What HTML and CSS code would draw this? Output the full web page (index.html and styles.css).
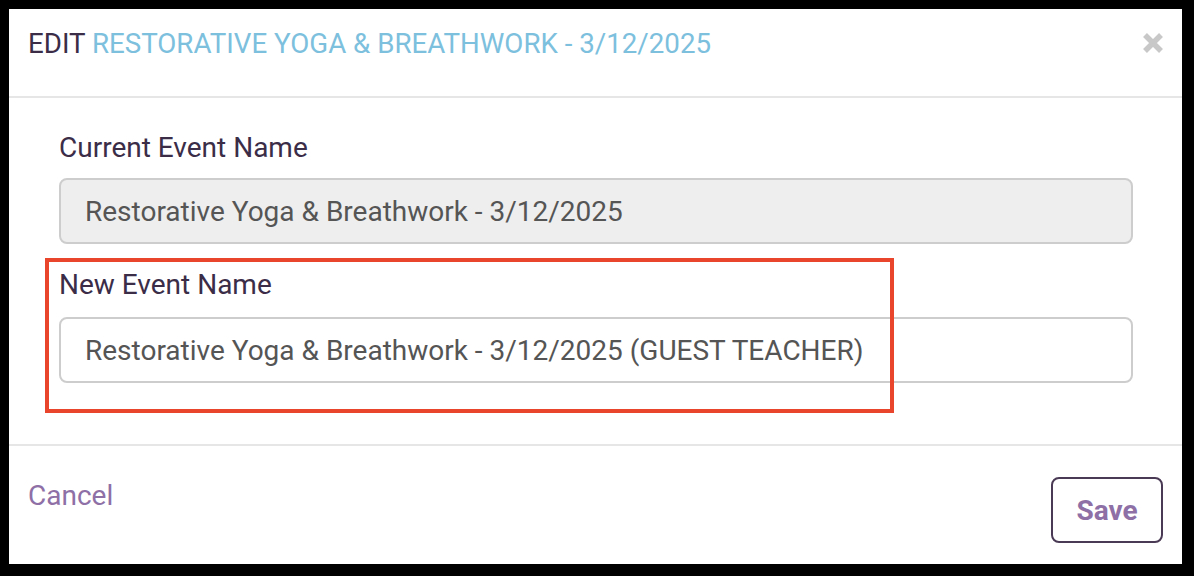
FILE: index.html
```html
<!DOCTYPE html>
<html lang="en">
<head>
<meta charset="utf-8">
<title>Edit Event</title>
<link rel="stylesheet" href="styles.css">
</head>
<body>
<div class="modal">
  <div class="modal-header">
    <h4 class="modal-title">EDIT <span class="event">RESTORATIVE YOGA &amp; BREATHWORK - 3/12/2025</span></h4>
    <button class="close" type="button" aria-label="Close">
      <svg width="20" height="20" viewBox="0 0 20 20"><path d="M2 2L18 18M18 2L2 18" stroke="#c8c8c8" stroke-width="5.5" stroke-linecap="butt" fill="none"/></svg>
    </button>
  </div>
  <div class="modal-body">
    <div class="form-group">
      <label class="label">Current Event Name</label>
      <input class="input input-disabled" type="text" value="Restorative Yoga &amp; Breathwork - 3/12/2025" disabled>
    </div>
    <div class="form-group last">
      <label class="label label-new">New Event Name</label>
      <input class="input" type="text" value="Restorative Yoga &amp; Breathwork - 3/12/2025 (GUEST TEACHER)">
    </div>
  </div>
  <div class="modal-footer">
    <a class="cancel" href="#">Cancel</a>
    <button class="save" type="button">Save</button>
  </div>
  <div class="highlight"></div>
</div>
</body>
</html>
```

FILE: styles.css
```css
html, body {
  margin: 0;
  padding: 0;
  background: #000;
}
body {
  width: 1194px;
  height: 576px;
  overflow: hidden;
  font-family: Roboto, "Liberation Sans", Arial, sans-serif;
}
.modal {
  position: relative;
  margin: 9px 0 0 9px;
  width: 1173px;
  height: 555px;
  background: #fff;
  display: flex;
  flex-direction: column;
}
.modal-header {
  display: flex;
  justify-content: space-between;
  align-items: flex-start;
  box-sizing: border-box;
  height: 89px;
  padding: 15px 19px 0 19px;
  border-bottom: 2px solid #e6e6e6;
}
.modal-title {
  margin: 0;
  font-size: 27.7px;
  font-weight: 400;
  line-height: 40px;
  color: #3b2d48;
}
.event {
  color: #7cc0de;
}
.close {
  margin: 9px 0 0 0;
  padding: 0;
  border: 0;
  background: transparent;
  width: 20px;
  height: 20px;
  display: block;
}
.close svg {
  display: block;
}
.modal-body {
  padding: 30px 49px 0 50px;
  height: 348px;
  box-sizing: border-box;
  border-bottom: 2px solid #e6e6e6;
}
.form-group {
  display: flex;
  flex-direction: column;
  margin-bottom: 21px;
}
.label {
  font-size: 28px;
  line-height: 40px;
  color: #3b2d48;
  margin-bottom: 10px;
}
.label-new {
  margin-bottom: 12px;
}
.input {
  box-sizing: border-box;
  height: 66px;
  width: 100%;
  border: 2px solid #cdcdcd;
  border-radius: 8px;
  padding: 0 24px;
  font-family: Roboto, "Liberation Sans", Arial, sans-serif;
  font-size: 28px;
  color: #555;
  background: #fff;
  outline: none;
}
.input-disabled {
  background: #eee;
  color: #555;
  -webkit-text-fill-color: #555;
  opacity: 1;
}
.modal-footer {
  display: flex;
  justify-content: space-between;
  align-items: flex-start;
  padding: 31px 19px 0 19px;
}
.cancel {
  font-size: 28px;
  line-height: 40px;
  color: #8e6fa6;
  text-decoration: none;
  margin-top: -1px;
}
.save {
  box-sizing: border-box;
  width: 112px;
  height: 66px;
  border: 2px solid #4a3a55;
  border-radius: 8px;
  background: #fff;
  color: #8e6fa6;
  font-family: Roboto, "Liberation Sans", Arial, sans-serif;
  font-size: 28px;
  font-weight: 700;
  padding: 0;
}
.highlight {
  position: absolute;
  left: 36px;
  top: 249px;
  width: 849px;
  height: 155px;
  box-sizing: border-box;
  border: 4px solid #e8452c;
  pointer-events: none;
}
```
